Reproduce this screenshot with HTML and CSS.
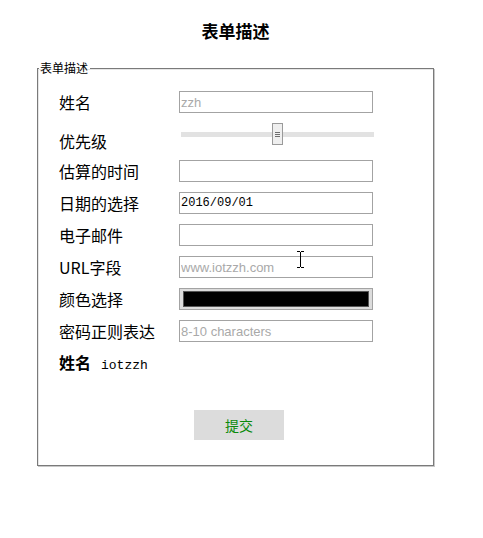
FILE: index.html
```html
<!DOCTYPE html>
<html lang="zh">
<head>
<meta charset="utf-8">
<title>表单描述</title>
<link rel="stylesheet" href="styles.css">
</head>
<body>
<div class="wrap">
  <h1 class="title">表单描述</h1>
  <form class="form">
    <fieldset class="box">
      <legend class="legend">表单描述</legend>
      <div class="content">
        <div class="row">
          <label class="label">姓名</label>
          <input class="field" type="text" placeholder="zzh">
        </div>
        <div class="row row-range">
          <label class="label label-low">优先级</label>
          <input class="range" type="range" min="0" max="100" value="50">
        </div>
        <div class="row">
          <label class="label">估算的时间</label>
          <input class="field" type="number">
        </div>
        <div class="row">
          <label class="label">日期的选择</label>
          <input class="field mono" type="text" value="2016/09/01">
        </div>
        <div class="row">
          <label class="label">电子邮件</label>
          <input class="field" type="email">
        </div>
        <div class="row">
          <label class="label">URL字段</label>
          <input class="field" type="url" placeholder="www.iotzzh.com">
        </div>
        <div class="row">
          <label class="label">颜色选择</label>
          <input class="color" type="color" value="#000000">
        </div>
        <div class="row">
          <label class="label">密码正则表达</label>
          <input class="field" type="text" placeholder="8-10 characters">
        </div>
        <div class="output-row">
          <b class="out-label">姓名</b><span class="out-value">iotzzh</span>
        </div>
        <div class="actions">
          <button class="submit" type="button">提交</button>
        </div>
      </div>
    </fieldset>
  </form>
</div>
<svg class="cursor" width="9" height="17" viewBox="0 0 9 17" aria-hidden="true">
  <path d="M1 0.5h3M5 0.5h3M4.5 1v15M1 16.5h3M5 16.5h3" stroke="#000" stroke-width="1" fill="none"/>
</svg>
</body>
</html>
```
FILE: styles.css
```css
html, body {
  margin: 0;
  padding: 0;
  background: #fff;
}
body {
  font-family: "Noto Sans CJK SC", "Liberation Sans", sans-serif;
  color: #000;
  position: relative;
  width: 483px;
  height: 538px;
  overflow: hidden;
}
.wrap {
  width: 397px;
  margin-left: 37px;
}
.title {
  margin: 20px 0 0 0;
  height: 22px;
  line-height: 22px;
  font-size: 17px;
  font-weight: bold;
  text-align: center;
}
.form {
  margin: 19px 0 0 0;
}
.box {
  margin: 0;
  padding: 0;
  border: 1px solid #7a7a7a;
  box-shadow: 1px 1px 0 #c8c8c8, inset 1px 1px 0 #e6e6e6;
  min-width: 0;
}
.legend {
  margin-left: 1px;
  padding: 0 2px 0 1px;
  font-size: 12px;
  line-height: 14px;
  height: 14px;
}
.content {
  padding: 16px 0 25px 21px;
  display: flex;
  flex-direction: column;
  gap: 10px;
}
.row {
  display: flex;
  align-items: center;
  height: 22px;
}
.label {
  width: 120px;
  flex: none;
  font-size: 16px;
  line-height: 22px;
  white-space: nowrap;
}
.row-range {
  height: 27px;
  align-items: flex-start;
}
.label-low {
  padding-top: 7px;
}
.field {
  box-sizing: border-box;
  width: 194px;
  height: 22px;
  margin: 0;
  padding: 0 1px;
  border: 1px solid #a3a3a3;
  background: #fff;
  font-family: "Liberation Sans", Arial, sans-serif;
  font-size: 13px;
  color: #000;
  outline: none;
}
.field::placeholder {
  color: #a9a9a9;
}
.field::-webkit-inner-spin-button,
.field::-webkit-outer-spin-button {
  -webkit-appearance: none;
  margin: 0;
}
.mono {
  font-family: "Liberation Mono", "DejaVu Sans Mono", monospace;
  font-size: 12px;
}
.range {
  -webkit-appearance: none;
  appearance: none;
  width: 193px;
  height: 23px;
  margin: 0 0 0 2px;
  padding: 0;
  background: transparent;
}
.range::-webkit-slider-runnable-track {
  height: 5px;
  background: #e2e2e2;
  border: none;
}
.range::-webkit-slider-thumb {
  -webkit-appearance: none;
  appearance: none;
  box-sizing: border-box;
  width: 11px;
  height: 22px;
  margin-top: -9px;
  border: 1px solid #9a9a9a;
  background-color: #efefef;
  background-image:
    linear-gradient(#6e6e6e, #6e6e6e),
    linear-gradient(#6e6e6e, #6e6e6e),
    linear-gradient(#6e6e6e, #6e6e6e);
  background-size: 5px 1px, 5px 1px, 5px 1px;
  background-position: 2px 8px, 2px 10px, 2px 12px;
  background-repeat: no-repeat;
}
.color {
  -webkit-appearance: none;
  appearance: none;
  box-sizing: border-box;
  width: 194px;
  height: 22px;
  margin: 0;
  padding: 0;
  border: 1px solid #a3a3a3;
  background: #dcdcdc;
}
.color::-webkit-color-swatch-wrapper {
  padding: 2px 3px;
}
.color::-webkit-color-swatch {
  border: 1px solid #555;
  border-radius: 0;
}
.output-row {
  height: 20px;
  line-height: 20px;
  white-space: nowrap;
}
.out-label {
  font-size: 16px;
  font-weight: bold;
}
.out-value {
  margin-left: 10px;
  font-family: "Liberation Mono", "DejaVu Sans Mono", monospace;
  font-size: 13px;
}
.actions {
  margin-top: 28px;
  padding-left: 135px;
}
.submit {
  width: 90px;
  height: 30px;
  margin: 0;
  padding: 0;
  border: none;
  background: #dcdcdc;
  color: #0a8a0a;
  font-family: "Noto Sans CJK SC", sans-serif;
  font-size: 14px;
}
.cursor {
  position: absolute;
  left: 296px;
  top: 251px;
}
```
